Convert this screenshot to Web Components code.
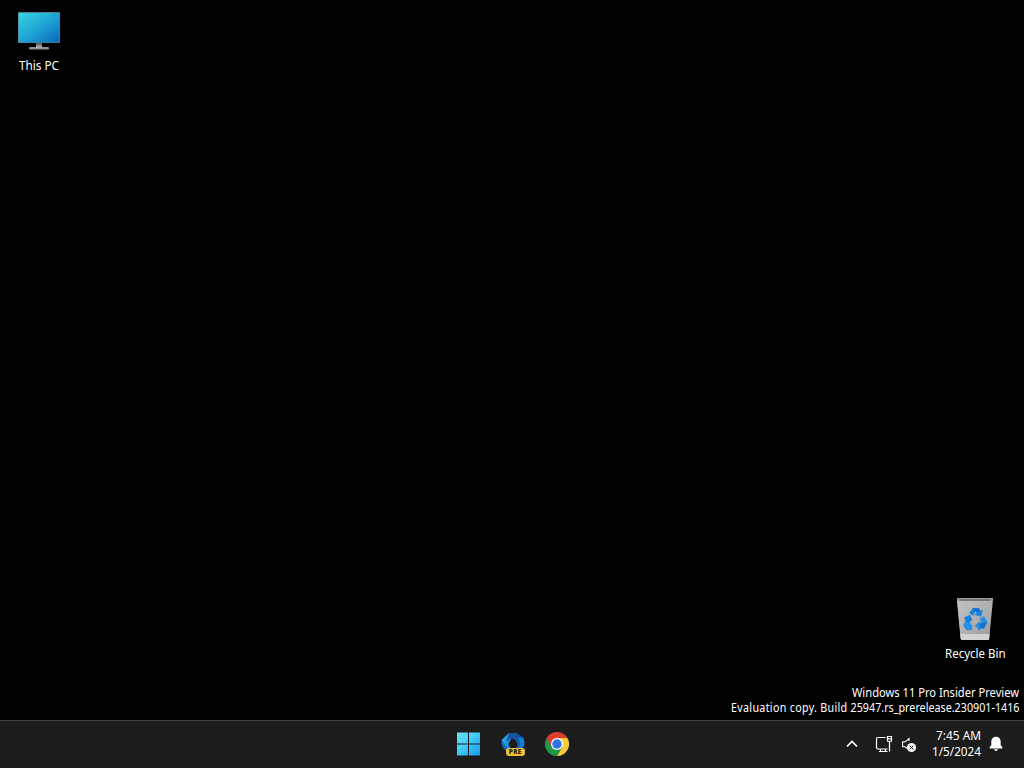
<!DOCTYPE html>
<html lang="en">
<head>
<meta charset="utf-8">
<title>Desktop</title>
<style>
html,body{margin:0;height:100%;background:#000;overflow:hidden}
body{font-family:"Noto Sans","Open Sans",sans-serif;font-size:12px;color:#fff}
</style>
</head>
<body>
<win-desktop></win-desktop>
<script>
const define = (name, html, ready) => {
  const t = document.createElement('template');
  t.innerHTML = html;
  customElements.define(name, class extends HTMLElement {
    constructor() {
      super();
      this.attachShadow({mode: 'open'}).append(t.content.cloneNode(true));
    }
    connectedCallback() { if (ready) ready(this); }
  });
};

// A single line of text condensed to the width given in its attribute.
define('fit-text', `<style>
:host{display:block;height:15px;line-height:15px;white-space:nowrap;position:relative}
span{display:inline-block;transform-origin:0 50%}
</style><span><slot></slot></span>`, el => {
  const w = +el.getAttribute('width'), s = el.shadowRoot.querySelector('span');
  el.style.width = w + 'px';
  s.style.transform = 'scaleX(' + w / s.getBoundingClientRect().width + ')';
});

define('pc-icon', `<style>:host{display:block}svg{display:block}</style>
<svg width="48" height="48" viewBox="0 0 48 48">
<defs><linearGradient id="s" x1="0" y1="0" x2="1" y2="1"><stop stop-color="#35d5e2"/><stop offset=".5" stop-color="#1fa5d5"/><stop offset="1" stop-color="#0868b8"/></linearGradient></defs>
<rect x="3" y="4" width="42" height="31" rx="1" fill="#547f8e"/>
<rect x="3.6" y="5" width="40.8" height="29.4" fill="url(#s)"/>
<path d="M21 35h6v5h-6z" fill="#858585"/><path d="M21 35h6v1.500h-6z" fill="#525b60"/>
<rect x="14" y="39" width="20" height="2.600" rx="1" fill="#958f8d"/>
<path d="M21 38h6v2h-6z" fill="#aaa5a2"/>
</svg>`);

define('bin-icon', `<style>:host{display:block}svg{display:block}</style>
<svg width="48" height="48" viewBox="0 0 48 48">
<defs><linearGradient id="b" x1="0" y1="0" x2="1" y2="1"><stop stop-color="#c2c2c2"/><stop offset=".6" stop-color="#adadae"/><stop offset="1" stop-color="#99999b"/></linearGradient></defs>
<path d="M7 2h34q1.200 0 1 1.200L38.200 43q-.1 1-1 1H11q-1 0-1.100-1L6 3.200Q6 2 7 2z" fill="url(#b)"/>
<path d="M7 2h34l1 1-1 2H7L6 3z" fill="#999"/><path d="M8 3.200h32l-2 1.600H10z" fill="#6c6c6c"/>
<path d="M9.300 38h29.400L38 43q-.1 1-1 1H11q-1 0-1.100-1z" fill="#d2d2d2"/>
<path d="M6.400 5l3.700 38" stroke="#ccc" stroke-width=".7"/>
<g stroke-linejoin="round" stroke-width=".6">
<path d="M18.500 17l3.300-4.500h6l1.500 2.700 2.200-1-1.500 6-6-1.500 2-1.300-1.700-2.500-2.200 4.500z" fill="#1685df" stroke="#1685df"/>
<path d="M21.800 12.500h6l1.500 2.700-4.600.3z" fill="#0966c1"/>
<path d="M13.500 21.500l5.500-2.200 2.200 5.200-1.500-.3-1.500 3.200 2.500 1.800v4.500h-5l-3-4.700 2-3.800z" fill="#1681da" stroke="#1681da"/>
<path d="M14.700 25.200l3.500 1.700 2.500 1.800v5h-5l-3-4.700z" fill="#2392ea"/>
<path d="M28.800 22.500l4.300-1.700 3 4.900-3 6.500-4.500.4v2l-4.500-4.900 4.500-4.500v2.300l2.400-.2z" fill="#268fe0" stroke="#268fe0"/>
<path d="M30.700 27.300l5.400-1.600-3 6.500-4.500.4v-5.100z" fill="#1175cd"/>
</g></svg>`);

define('desktop-icon', `<style>
:host{position:absolute;display:flex;flex-direction:column;align-items:center;gap:2px;width:76px}
</style><slot name="icon"></slot><slot></slot>`);

define('build-watermark', `<style>
:host{position:absolute;right:5px;bottom:5px;display:flex;flex-direction:column;align-items:flex-end}
.wide{letter-spacing:.33px}
</style>
<fit-text width="167">Windows 11 Pro Insider Preview</fit-text>
<fit-text width="288.500"><span class="wide">Evaluation copy. Build </span>25947.rs_prerelease.230901-1416</fit-text>`);

define('start-icon', `<style>:host{display:block}svg{display:block}</style>
<svg width="24" height="24" viewBox="0 0 24 24"><defs><linearGradient id="w" gradientUnits="userSpaceOnUse" x1="0" y1="0" x2="23" y2="24"><stop stop-color="#70e2fc"/><stop offset=".5" stop-color="#42c8f5"/><stop offset="1" stop-color="#129ce6"/></linearGradient></defs>
<path d="M1 .500h11v11H1zM13 .500h11v11H13zM1 12.500h11v11H1zM13 12.500h11v11H13z" fill="url(#w)"/></svg>`);

define('copilot-icon', `<style>
:host{display:block;position:relative;width:24px;height:24px}svg{display:block}
b{position:absolute;left:5px;top:16px;width:18.500px;height:8px;border-radius:3px;background:#efc030;color:#292415;font:800 6.500px/8px "Open Sans",sans-serif;letter-spacing:.3px;text-align:center}
</style>
<svg width="24" height="24" viewBox="0 0 24 24">
<defs><linearGradient id="c" x1="0" y1="0" x2="1" y2="1"><stop stop-color="#39b0ea"/><stop offset="1" stop-color="#0872c9"/></linearGradient></defs>
<path d="M8 1h7l-5 6-2.500 5 3.500 8-4-.5-4-3Q.5 14 .8 10.500L1 7.500z" fill="url(#c)"/>
<path d="M8 1h7.500l6.500 4.500L23.300 9v4l-2.300 4h-6l1.500-5L14 8q-2-2-5-1L5 10z" fill="#1354a3"/>
<path d="M17 6l5-.5L23.300 9v4L21 17h-4l2-6z" fill="#147ed0"/>
<path d="M1 8l4 7 5 5-5-1-3-4z" fill="#1265b7"/>
</svg><b>PRE</b>`);

define('chrome-icon', `<style>:host{display:block}svg{display:block}</style>
<svg width="24" height="24" viewBox="0 0 48 48">
<path d="M24 24L3.200 12A24 24 0 0 1 44.800 12z" fill="#df3d31"/>
<path d="M24 24L3.200 12A24 24 0 0 0 24 48l10.400-18z" fill="#229848"/>
<path d="M24 12h20.800A24 24 0 0 1 24 48l10.400-18z" fill="#f8cb3b"/>
<path d="M3.200 12L13.600 30 24 12z" fill="#df3d31"/>
<path d="M13.600 30L24 48l10.400-18z" fill="#229848"/>
<circle cx="24" cy="24" r="12" fill="#fff"/><circle cx="24" cy="24" r="9.500" fill="#2d75e5"/></svg>`);

define('tray-icons', `<style>:host{display:block}svg{display:block}</style>
<svg width="80" height="24" viewBox="842 732 80 24" fill="none" stroke="#fff" stroke-width="1.200">
<path d="M847 746.500l5-5 5 5" stroke-width="1.600"/>
<path d="M885.500 737.500H878q-1.500 0-1.500 1.500v8.500q0 1.500 1.500 1.500h9.500M880.500 749v2.500M885.500 749v2.500M879 751.500h8.500"/>
<path d="M887.500 736.500h4v4q0 1-1 1h-2q-1 0-1-1zM887.500 738.800h4M889.500 741.500v10"/>
<path d="M909 741v-2.500l-3.500 3.300H902.600v5h2.600l2 1.800" stroke-width="1.100"/>
<circle cx="911.500" cy="747.500" r="4.600" fill="#f5f5f5" stroke="none"/>
<path d="M909.700 745.700l3.600 3.600m0-3.600l-3.600 3.600" stroke="#1c1c1c" stroke-width="1"/>
</svg>`);

define('bell-icon', `<style>:host{display:block}svg{display:block}</style>
<svg width="14" height="16" viewBox="0 0 14 16" fill="#fff"><path d="M7 .7C4 .7 2.300 2.900 2.300 5.500V9L.5 11.600Q.2 12.500 1.200 12.500h11.600q1 0 .7-.9L11.700 9V5.500C11.700 2.900 10 .7 7 .7zM5 13.300h4q-.4 1.700-2 1.700t-2-1.700z"/></svg>`);

define('task-clock', `<style>:host{display:flex;flex-direction:column;align-items:flex-end;gap:1px;padding-bottom:1px}</style>
<fit-text width="45">7:45 AM</fit-text><fit-text width="49">1/5/2024</fit-text>`);

define('task-bar', `<style>
:host{box-sizing:border-box;height:48px;display:grid;grid-template-columns:1fr auto 1fr;align-items:center;background:#1c1c1c;border-top:1px solid #3d3d3d;padding-bottom:1px}
.apps{grid-column:2;display:flex;gap:20px;padding-left:1px}
start-icon{margin-right:1px}
.tray{justify-self:end;display:flex;align-items:center;gap:10px;padding-right:21px}
bell-icon{margin-left:-2px}
</style>
<div class="apps"><start-icon></start-icon><copilot-icon></copilot-icon><chrome-icon></chrome-icon></div>
<div class="tray"><tray-icons></tray-icons><task-clock></task-clock><bell-icon></bell-icon></div>`);

define('win-desktop', `<style>
:host{display:flex;flex-direction:column;height:100vh}
main{flex:1;position:relative;background:#000}
</style>
<main>
<desktop-icon style="left:1px;top:8px"><pc-icon slot="icon"></pc-icon><fit-text width="40">This PC</fit-text></desktop-icon>
<desktop-icon style="left:937px;top:596px"><bin-icon slot="icon"></bin-icon><fit-text width="60.500">Recycle Bin</fit-text></desktop-icon>
<build-watermark></build-watermark>
</main>
<task-bar></task-bar>`);
</script>
</body>
</html>
